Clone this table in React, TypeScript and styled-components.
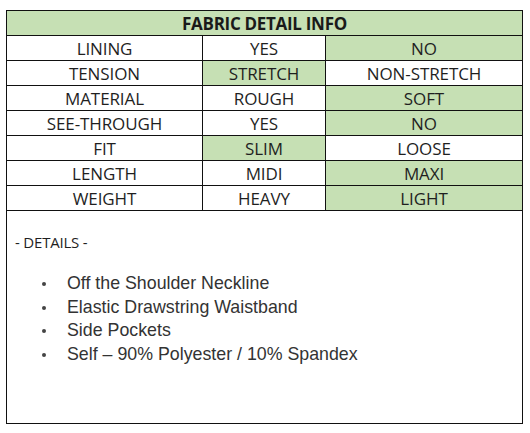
import React from "react";
import styled, { createGlobalStyle } from "styled-components";

const Global = createGlobalStyle`
  html, body { margin: 0; padding: 0; background: #fff; }
  body { width: 530px; height: 433px; overflow: hidden; }
`;

const Sheet = styled.div`
  margin: 10px 0 0 6px;
  width: 517px;
  height: 414px;
  box-sizing: border-box;
  border: 1px solid #111;
  display: flex;
  flex-direction: column;
`;

const Grid = styled.div`
  display: grid;
  grid-template-columns: 196px 123px 1fr;
  grid-auto-rows: 25px;
`;

const Header = styled.div`
  grid-column: 1 / -1;
  background: #c6e0b4;
  border-bottom: 1px solid #111;
  display: flex;
  align-items: center;
  justify-content: center;
  font-family: "Open Sans", "Noto Sans", sans-serif;
  font-weight: 700;
  font-size: 17px;
  color: #1a1a1a;
  letter-spacing: -0.3px;
`;

const Cell = styled.div<{ $on?: boolean; $last?: boolean }>`
  background: ${(p) => (p.$on ? "#c6e0b4" : "#fff")};
  border-bottom: 1px solid #111;
  border-right: ${(p) => (p.$last ? "none" : "1px solid #111")};
  display: flex;
  align-items: center;
  justify-content: center;
  font-family: "Open Sans", "Noto Sans", sans-serif;
  font-size: 17px;
  color: #1f1f1f;
  letter-spacing: -0.1px;
`;

const Details = styled.div`
  padding: 21px 0 0 8px;
`;

const DetailsTitle = styled.div`
  font-family: "Open Sans", "Noto Sans", sans-serif;
  font-size: 15px;
  color: #1f1f1f;
  letter-spacing: -0.2px;
`;

const List = styled.ul`
  margin: 20px 0 0 0;
  padding: 0 0 0 27px;
  list-style: none;
  font-family: "Liberation Sans", Arial, sans-serif;
  font-size: 17.8px;
  line-height: 23.7px;
  color: #333;
`;

const Item = styled.li`
  display: flex;
  align-items: center;
`;

const Dot = styled.span`
  width: 4px;
  height: 4px;
  border-radius: 50%;
  background: #444;
  margin-right: 21px;
  flex: none;
`;

const rows: [string, string, string, number][] = [
  ["LINING", "YES", "NO", 2],
  ["TENSION", "STRETCH", "NON-STRETCH", 1],
  ["MATERIAL", "ROUGH", "SOFT", 2],
  ["SEE-THROUGH", "YES", "NO", 2],
  ["FIT", "SLIM", "LOOSE", 1],
  ["LENGTH", "MIDI", "MAXI", 2],
  ["WEIGHT", "HEAVY", "LIGHT", 2],
];

const items = [
  "Off the Shoulder Neckline",
  "Elastic Drawstring Waistband",
  "Side Pockets",
  "Self – 90% Polyester / 10% Spandex",
];

export default function App() {
  return (
    <>
      <Global />
      <Sheet>
        <Grid>
          <Header>FABRIC DETAIL INFO</Header>
          {rows.map(([a, b, c, sel]) => (
            <React.Fragment key={a}>
              <Cell>{a}</Cell>
              <Cell $on={sel === 1}>{b}</Cell>
              <Cell $on={sel === 2} $last>
                {c}
              </Cell>
            </React.Fragment>
          ))}
        </Grid>
        <Details>
          <DetailsTitle>- DETAILS -</DetailsTitle>
          <List>
            {items.map((t) => (
              <Item key={t}>
                <Dot />
                {t}
              </Item>
            ))}
          </List>
        </Details>
      </Sheet>
    </>
  );
}
